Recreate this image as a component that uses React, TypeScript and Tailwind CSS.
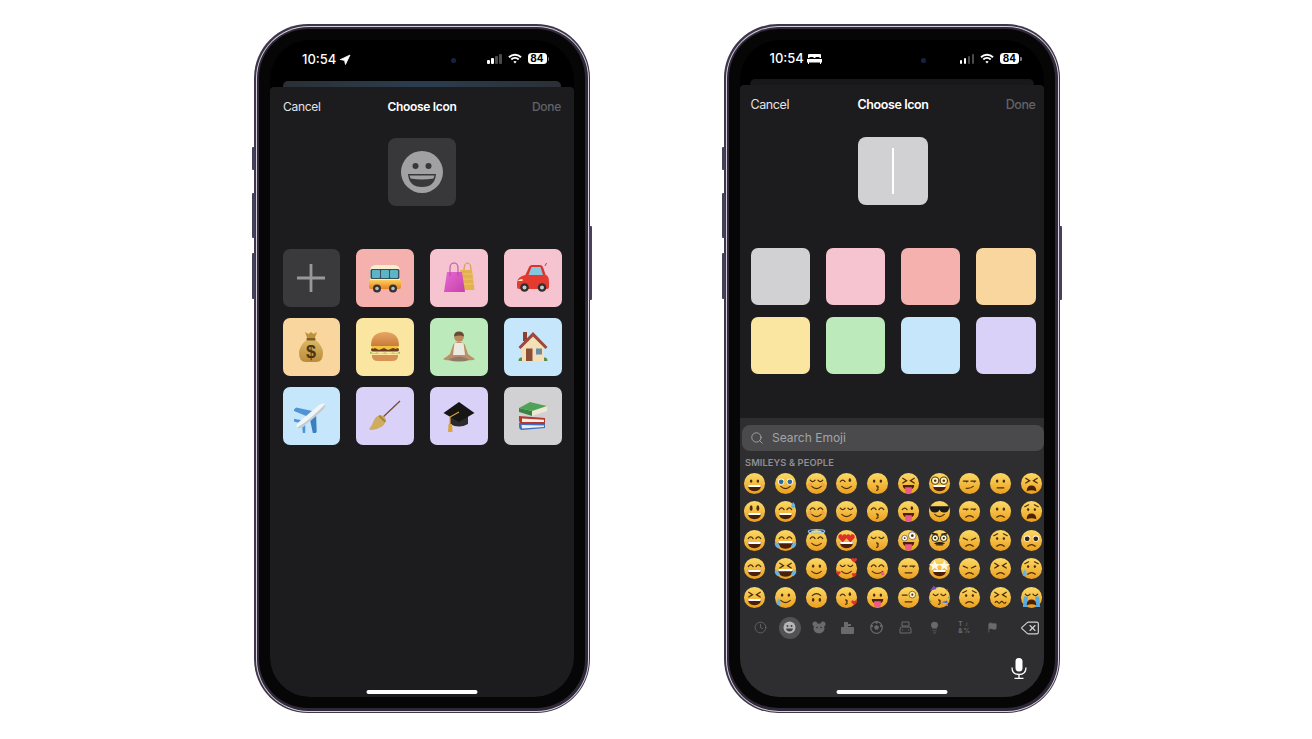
import type { ReactNode } from "react";
import { Clock, Delete, Flag, Lightbulb, Navigation, Search } from "lucide-react";

const Wifi = () => (
  <svg width="14" height="11" viewBox="0 0 14 11" fill="none" stroke="#fff" strokeWidth="1.9">
    <path d="M1 4.200C4.400 .9 9.600 .9 13 4.200" />
    <path d="M3.300 6.500c2.100-2 5.300-2 7.400 0" />
    <path d="M7 10.600 5.400 8.700c.9-.8 2.300-.8 3.200 0z" fill="#fff" stroke="none" />
  </svg>
);

const Signal = () => (
  <div className="flex items-end gap-[1.5px] h-[10px]">
    <div className="w-[2.5px] h-[4px] rounded-[1px] bg-white" />
    <div className="w-[2.5px] h-[6px] rounded-[1px] bg-white" />
    <div className="w-[2.5px] h-[8px] rounded-[1px] bg-[#4a4a4c]" />
    <div className="w-[2.5px] h-[10px] rounded-[1px] bg-[#4a4a4c]" />
  </div>
);

const Battery = () => (
  <div className="flex items-center gap-[1px]">
    <div className="w-[19px] h-[11px] rounded-[3.5px] bg-white text-black text-[10px] leading-[11px] font-bold text-center">84</div>
    <div className="w-[1.5px] h-[4px] rounded-r-[1px] bg-[#77777a]" />
  </div>
);

const BedIcon = () => (
  <svg width="15" height="10" viewBox="0 0 15 10" fill="#fff">
    <path d="M2 0h11a1 1 0 0 1 1 1v3h-1.500V3h-4v1h-2V3h-4v1H1V1a1 1 0 0 1 1-1z" />
    <path d="M0 5h15v3.500h-1V10h-1V8.500H2V10H1V8.500H0z" />
  </svg>
);

function Phone({ timeClass, iconsClass, dotClass, peekClass, statusIcon, children }: {
  timeClass: string;
  iconsClass: string;
  dotClass: string;
  peekClass: string;
  statusIcon: ReactNode;
  children: ReactNode;
}) {
  return (
    <div className="relative w-[336px] h-[689px]">
      <div className="absolute left-[-2px] top-[123px] w-[3px] h-[23px] rounded-l-[1px] bg-[#47405a]" />
      <div className="absolute left-[-2px] top-[169px] w-[3px] h-[45px] rounded-l-[1px] bg-[#47405a]" />
      <div className="absolute left-[-2px] top-[229px] w-[3px] h-[46px] rounded-l-[1px] bg-[#47405a]" />
      <div className="absolute right-[-2px] top-[202px] w-[3px] h-[74px] rounded-r-[1px] bg-[#47405a]" />
      <div className="w-full h-full rounded-[54px] bg-[#3e3549] p-[1.5px]">
        <div className="w-full h-full rounded-[52.5px] bg-[#d5d0dc] p-[1px]">
          <div className="w-full h-full rounded-[51.5px] bg-[#2f2838] p-[2.5px]">
            <div className="w-full h-full rounded-[49px] bg-[#060606] p-[11px]">
              <div className="relative w-full h-full rounded-[40px] bg-black overflow-hidden flex flex-col">
                <div className={`absolute top-[18px] w-[5px] h-[5px] rounded-full bg-[#16233f] ${dotClass}`} />
                <div className="relative h-[41px] shrink-0 text-white">
                  <div className={`absolute flex items-center gap-[3px] text-[13px] font-medium leading-none ${timeClass}`}>
                    <span>10:54</span>
                    {statusIcon}
                  </div>
                  <div className={`absolute flex items-center ${iconsClass}`}>
                    <Signal />
                    <div className="ml-[6px]"><Wifi /></div>
                    <div className="ml-[6px]"><Battery /></div>
                  </div>
                </div>
                <div className={`h-[6px] rounded-t-[5px] shrink-0 ${peekClass}`} />
                {children}
                <div className="absolute bottom-[3.5px] left-1/2 -translate-x-1/2 w-[111px] h-[3.5px] rounded-full bg-white" />
              </div>
            </div>
          </div>
        </div>
      </div>
    </div>
  );
}

type Kind = "bus" | "bags" | "car" | "money" | "burger" | "yoga" | "house" | "plane" | "broom" | "cap" | "books";

function TileEmoji({ kind }: { kind: Kind }) {
  return (
    <svg width="34" height="34" viewBox="0 0 34 34">
      <defs>
        <linearGradient id="busBand" x1="0" y1="0" x2="0" y2="1">
          <stop offset="0" stopColor="#fbd05a" />
          <stop offset="1" stopColor="#ea7f24" />
        </linearGradient>
        <linearGradient id="bagPink" x1="0" y1="0" x2="1" y2="1">
          <stop offset="0" stopColor="#e56bd2" />
          <stop offset="1" stopColor="#c740ac" />
        </linearGradient>
        <linearGradient id="sack" x1="0" y1="0" x2="0" y2="1">
          <stop offset="0" stopColor="#dcb969" />
          <stop offset="1" stopColor="#b98c3a" />
        </linearGradient>
        <linearGradient id="bun" x1="0" y1="0" x2="0" y2="1">
          <stop offset="0" stopColor="#e8a665" />
          <stop offset="1" stopColor="#c97c3a" />
        </linearGradient>
      </defs>
      {kind === "bus" && (
        <g>
          <path d="M2 10q0-6 6-6h18q6 0 6 6v14H2z" fill="#f8edcc" />
          <path d="M1 19h32v7q0 2-2 2H3q-2 0-2-2z" fill="url(#busBand)" />
          <rect x="2.500" y="8" width="29" height="10" rx="1.500" fill="#35505c" />
          <rect x="4" y="9" width="8" height="8" rx="1" fill="#5db4c6" />
          <rect x="13" y="9" width="8" height="8" rx="1" fill="#5db4c6" />
          <rect x="22" y="9" width="8" height="8" rx="1" fill="#5db4c6" />
          <circle cx="9" cy="27.500" r="4" fill="#333" />
          <circle cx="25" cy="27.500" r="4" fill="#333" />
          <circle cx="9" cy="27.500" r="1.800" fill="#bbb" />
          <circle cx="25" cy="27.500" r="1.800" fill="#bbb" />
        </g>
      )}
      {kind === "bags" && (
        <g>
          <path d="M18 9h12l2.500 20H19z" fill="#e3b14e" />
          <path d="M22 9q0-7 3.500-7T29 9" fill="none" stroke="#cd9a3c" strokeWidth="1" />
          <path d="M19 13h13M19.500 18h12.500M20 23h12.500" stroke="#f0cc76" strokeWidth=".8" />
          <path d="M5 11h15l3 20H2z" fill="url(#bagPink)" />
          <path d="M8 15V7q0-5 4-5t4 5v8" fill="none" stroke="#b8469f" strokeWidth="1" />
        </g>
      )}
      {kind === "car" && (
        <g>
          <path d="M9 15 13 6q1-2 3-2h8q2 0 3 2l3 9z" fill="#d9352b" />
          <path d="M12.500 14l3-8h9l2.500 8z" fill="#86c7de" />
          <path d="M1 22q0-6 8-8h21q3 1 3 7v5q0 2-2 2H3q-2 0-2-2z" fill="#e53a2f" />
          <path d="M1.500 20q2-2 5-2v2z" fill="#fff1c4" />
          <path d="M29 5l1.500-3" stroke="#d9352b" strokeWidth="1" />
          <circle cx="8.500" cy="26.500" r="4.300" fill="#2f2f2f" />
          <circle cx="26" cy="26.500" r="4.300" fill="#2f2f2f" />
          <circle cx="8.500" cy="26.500" r="2" fill="#c8c8c8" />
          <circle cx="26" cy="26.500" r="2" fill="#c8c8c8" />
        </g>
      )}
      {kind === "money" && (
        <g>
          <path d="M11 2l3.500 2L17 2l2.500 2L23 2l-2.500 7h-7z" fill="#bd9340" />
          <path d="M13.500 9h7q8.500 7 8.500 14 0 9-7 9H12q-7 0-7-9 0-7 8.500-14z" fill="url(#sack)" />
          <rect x="12.500" y="8" width="9" height="2.500" rx="1" fill="#7e5f22" />
          <text x="17" y="28" textAnchor="middle" fontSize="18" fontWeight="700" fill="#4a3712" fontFamily="Liberation Sans, sans-serif">$</text>
        </g>
      )}
      {kind === "burger" && (
        <g>
          <path d="M3 16q0-14 14-14t14 14z" fill="url(#bun)" />
          <rect x="3" y="18" width="28" height="3.500" rx="1.700" fill="#6a3a1e" />
          <path d="M3 16h28l-3 3-3-1-5 2-4-2-5 2-4-2-2 1z" fill="#f2c23b" />
          <path d="M2 21.500q3 3 7 1 3 2 8 0 4 2 8 0 4 2 7-1v2H2z" fill="#86b84a" />
          <path d="M4 25h26v1q0 5-6 5H10q-6 0-6-5z" fill="#d79353" />
        </g>
      )}
      {kind === "yoga" && (
        <g>
          <path d="M1 29q5-3 7-5l3-9q1-3 6-3t6 3l3 9q2 2 7 5-2 2-6 1l-5-2H13l-5 2q-4 1-7-1z" fill="#bb9068" />
          <path d="M12.500 13h9l1.500 12H11z" fill="#ebe9e0" />
          <path d="M6 30q11-7 22 0-11 3-22 0z" fill="#8f7a68" />
          <circle cx="17" cy="7" r="4.800" fill="#b98a60" />
          <path d="M12 6.500Q12 1.500 17 1.500t5 5q-4-2-10 0z" fill="#6b4a32" />
        </g>
      )}
      {kind === "house" && (
        <g>
          <rect x="7" y="2" width="4" height="9" fill="#8e3f34" />
          <path d="M6 16 17 5l11 11v15H6z" fill="#f3dfb8" />
          <path d="M2.500 17 17 2l14.500 15-2 2L17 6.500 4.500 19z" fill="#a0453a" />
          <rect x="10" y="18.500" width="6.500" height="12.500" fill="#8c4e37" />
          <rect x="20" y="18.500" width="6" height="6" fill="#6a8ca8" />
          <path d="M2.500 31q0-4 3.500-3.500V31zM28 27.500q3.500-.5 3.500 3.500H28z" fill="#5d8a45" />
        </g>
      )}
      {kind === "plane" && (
        <g transform="rotate(-40 17 17)">
          <path d="M14 15 6.500 1h4.500l11 14z" fill="#4f95d6" />
          <path d="M14 19 6.500 33h4.500l11-14z" fill="#3a7fc2" />
          <path d="M3 14-1 8h3l5 6zM3 20l-4 6h3l5-6z" fill="#4f95d6" />
          <path d="M-1 17q0-3.200 5-3.200h25q5 0 7 3.200-2 3.200-7 3.200H4q-5 0-5-3.200z" fill="#f2f5f7" />
          <path d="M-1 17q14 2.500 37 0-2 3.200-7 3.200H4q-5 0-5-3.200z" fill="#c0ccd5" />
        </g>
      )}
      {kind === "broom" && (
        <g>
          <path d="M13 20 32 2" stroke="#6f4a35" strokeWidth="1.200" />
          <path d="M12 16q6 1 6 6-3 8-14 9-2 0-3-1 3-3 5-9 2-4 6-5z" fill="#d0ac60" />
          <path d="M12 16l6 6-1.500 1.500-6-6z" fill="#a8853d" />
        </g>
      )}
      {kind === "cap" && (
        <g>
          <path d="M8 17v8q9 5 18 0v-8z" fill="#2b2b2b" />
          <path d="M1.500 14 17 3l15.500 11L17 23z" fill="#161616" />
          <path d="M17 13 8 18v8" fill="none" stroke="#d9a53e" strokeWidth="1.200" />
          <path d="M6.500 25h3.500l.5 8H6z" fill="#d9a53e" />
        </g>
      )}
      {kind === "books" && (
        <g>
          <path d="M3 24 29 25v4l-23 2q-3 0-3-4z" fill="#3d6fc0" />
          <path d="M5.500 26 28 26.500v1.500L6 29.500z" fill="#eeeeee" />
          <path d="M3 17l26 2v6H6q-3-.5-3-4z" fill="#b5392f" />
          <path d="M6 19.500l22 1.300v2.200H6z" fill="#f2efe6" />
          <path d="M3 9 14 3l17 4v5l-15 5-13-4z" fill="#eee8d4" />
          <path d="M3 9 14 3l17 4-15 5z" fill="#4fa257" />
          <path d="M3 9l13 3v5L3 13z" fill="#3a8443" />
        </g>
      )}
    </svg>
  );
}

const tilesLeft: { bg: string; kind: Kind }[] = [
  { bg: "bg-[#f4b1ad]", kind: "bus" },
  { bg: "bg-[#f6c3d1]", kind: "bags" },
  { bg: "bg-[#f6c3d1]", kind: "car" },
  { bg: "bg-[#f9d69e]", kind: "money" },
  { bg: "bg-[#fae6a1]", kind: "burger" },
  { bg: "bg-[#bdeabb]", kind: "yoga" },
  { bg: "bg-[#c6e7fb]", kind: "house" },
  { bg: "bg-[#c6e7fb]", kind: "plane" },
  { bg: "bg-[#d9d1f8]", kind: "broom" },
  { bg: "bg-[#d9d1f8]", kind: "cap" },
  { bg: "bg-[#d1d1d3]", kind: "books" },
];

const swatches = [
  "bg-[#d1d1d3]", "bg-[#f6c3d1]", "bg-[#f4b1ad]", "bg-[#f9d69e]",
  "bg-[#fae6a1]", "bg-[#bdeabb]", "bg-[#c6e7fb]", "bg-[#d9d1f8]",
];

type FaceSpec = [string, string, string?];

// order goes row by row, same as the emoji keyboard
const faces: FaceSpec[] = [
  ["dot", "grin"], ["tears", "smile"], ["closed", "smile", "blush"], ["wink", "smile"], ["dot", "kiss"], ["x", "tongue"], ["nerd", "grin"], ["side", "smirk"], ["dot", "flat"], ["x", "wail"],
  ["tall", "grin"], ["happy", "grin", "sweat"], ["happy", "smile", "blush"], ["closed", "smile"], ["happy", "kiss"], ["wink", "tongue"], ["shades", "smile"], ["side", "frown"], ["dot", "frown"], ["sadbrow", "wail"],
  ["happy", "grin"], ["happy", "laugh", "tearsboth"], ["happy", "smile", "halo"], ["hearts", "grin"], ["closed", "kiss"], ["zany", "tongue"], ["disguise", "flat"], ["sadclosed", "frown"], ["sadbrow", "frown"], ["plead", "frown"],
  ["happy", "grin"], ["x", "laugh", "tearsboth"], ["dot", "smile"], ["closed", "smile", "hearts"], ["happy", "tonguecorner"], ["side", "flat"], ["stars", "grin"], ["sadclosed", "frown"], ["x", "frown"], ["sadbrow", "frown", "tear"],
  ["x", "grin"], ["dot", "smile", "tear"], ["updown", "updown"], ["wink", "kiss", "heart"], ["dot", "tongue"], ["monocle", "flat"], ["closed", "kiss", "party"], ["sadbrow", "frown"], ["x", "wavy"], ["closed", "wail", "cry"],
];

const ink = "#4a2c0a";

function Eyes({ type }: { type: string }) {
  const line = { fill: "none", stroke: ink, strokeWidth: 1.3, strokeLinecap: "round" as const };
  switch (type) {
    case "tall":
      return <g fill={ink}><ellipse cx="8.500" cy="8.500" rx="1.500" ry="3" /><ellipse cx="15.500" cy="8.500" rx="1.500" ry="3" /></g>;
    case "happy":
      return <g {...line}><path d="M5.500 10q2.500-3.500 5 0" /><path d="M13.500 10q2.500-3.500 5 0" /></g>;
    case "closed":
      return <g {...line}><path d="M5.500 8.500q2.500 3 5 0" /><path d="M13.500 8.500q2.500 3 5 0" /></g>;
    case "sadclosed":
      return <g {...line}><path d="M5.500 9.500l4.500 2" /><path d="M18.500 9.500l-4.500 2" /></g>;
    case "wink":
      return <g {...line}><path d="M5.500 10q2.500-3 5 0" /><ellipse cx="15.500" cy="8.500" rx="1.300" ry="1.900" fill={ink} stroke="none" /></g>;
    case "x":
      return <g {...line}><path d="M6 6.500l4 2.500-4 2.500" /><path d="M18 6.500 14 9l4 2.500" /></g>;
    case "side":
      return <g {...line}><path d="M5.500 9.500h5" /><path d="M13.500 9.500h5" /><circle cx="9" cy="10.300" r=".8" fill={ink} stroke="none" /><circle cx="17" cy="10.300" r=".8" fill={ink} stroke="none" /></g>;
    case "sadbrow":
      return <g><path d="M5 7l4-2M19 7l-4-2" {...line} /><ellipse cx="8.500" cy="10" rx="1.200" ry="1.500" fill={ink} /><ellipse cx="15.500" cy="10" rx="1.200" ry="1.500" fill={ink} /></g>;
    case "hearts":
      return <g fill="#e0302b"><path d="M8 14 3.500 9.200Q3 5.500 6 5.500 7.500 5.500 8 7q.5-1.500 2-1.500 3 0 2.500 3.700z" /><path d="M16 14l-4.500-4.800Q11 5.500 14 5.500q1.500 0 2 1.500.5-1.500 2-1.500 3 0 2.500 3.700z" /></g>;
    case "nerd":
      return <g><circle cx="7.500" cy="9" r="3.800" fill="#fff3c4" stroke="#5a3c10" strokeWidth="1.200" /><circle cx="16.500" cy="9" r="3.800" fill="#fff3c4" stroke="#5a3c10" strokeWidth="1.200" /><circle cx="7.500" cy="9" r="1.300" fill={ink} /><circle cx="16.500" cy="9" r="1.300" fill={ink} /></g>;
    case "shades":
      return <path d="M2 6.500h20v2q-1 5-5.500 4.500-3.500 0-4.500-3-1 3-4.500 3Q3 13.500 2 8.500z" fill="#1a1a1a" />;
    case "disguise":
      return <g><path d="M4 4.500l6 1.500M20 4.500 14 6" stroke="#222" strokeWidth="2" /><circle cx="7.500" cy="9.500" r="3.500" fill="#fff3c4" stroke="#222" /><circle cx="16.500" cy="9.500" r="3.500" fill="#fff3c4" stroke="#222" /><circle cx="7.500" cy="9.500" r="1.200" fill="#222" /><circle cx="16.500" cy="9.500" r="1.200" fill="#222" /><path d="M6 15q6-3 12 0l-6 2z" fill="#222" /></g>;
    case "plead":
    case "tears":
      return <g><circle cx="7.500" cy="10" r="3.300" fill="#fff" /><circle cx="16.500" cy="10" r="3.300" fill="#fff" /><circle cx="7.500" cy="10.300" r="2.500" fill={type === "tears" ? "#2c6d9a" : "#3a2410"} /><circle cx="16.500" cy="10.300" r="2.500" fill={type === "tears" ? "#2c6d9a" : "#3a2410"} /></g>;
    case "zany":
      return <g><circle cx="8" cy="9.500" r="3" fill="#fff" stroke={ink} strokeWidth=".6" /><circle cx="16" cy="7" r="4" fill="#fff" stroke={ink} strokeWidth=".6" /><circle cx="8" cy="9.500" r="1" fill={ink} /><circle cx="16" cy="7" r="1.400" fill={ink} /></g>;
    case "monocle":
      return <g><path d="M5.500 9.500h5" {...line} /><circle cx="16" cy="9" r="3.500" fill="#fff3c4" stroke="#8a6a1c" strokeWidth="1" /><circle cx="16" cy="9" r="1.100" fill={ink} /></g>;
    case "stars":
      return <g fill="#fff8e0"><path d="M7 3l1.500 4 4.500.5-3.500 2.500 1 4L7 11.500 3.500 14l1-4L1 7.500 5.500 7z" /><path d="M17 3l1.500 4 4.500.5-3.500 2.500 1 4-3.500-2.500-3.500 2.500 1-4L11 7.500l4.500-.5z" /></g>;
    case "updown":
      return <g fill={ink}><ellipse cx="8.500" cy="14.500" rx="1.300" ry="1.900" /><ellipse cx="15.500" cy="14.500" rx="1.300" ry="1.900" /></g>;
    default:
      return <g fill={ink}><ellipse cx="8.500" cy="9.500" rx="1.300" ry="1.800" /><ellipse cx="15.500" cy="9.500" rx="1.300" ry="1.800" /></g>;
  }
}

function Mouth({ type }: { type: string }) {
  const line = { fill: "none", stroke: ink, strokeWidth: 1.2, strokeLinecap: "round" as const };
  switch (type) {
    case "grin":
      return <g><path d="M5 13.500h14q-.5 6.500-7 6.500t-7-6.500z" fill="#4a2008" /><path d="M5.300 13.500h13.400l-.4 2.200H5.700z" fill="#fff" /></g>;
    case "laugh":
      return <g><path d="M4 12.500h16q-.5 8-8 8t-8-8z" fill="#4a2008" /><path d="M4.300 12.500h15.400l-.4 2.400H4.700z" fill="#fff" /></g>;
    case "wail":
      return <path d="M7 20q0-6 5-6t5 6q-5-2-10 0z" fill="#4a2008" />;
    case "tongue":
      return <g><path d="M6 13.500h12q0 5-6 5t-6-5z" fill="#4a2008" /><path d="M8.500 16h7v3.500q0 3-3.500 3t-3.500-3z" fill="#ec5a86" /></g>;
    case "tonguecorner":
      return <g><path d="M6.500 15q5 4.500 11 0" {...line} /><path d="M15 16.500l3-1.500 1.500 3q-2 2-3.500 1z" fill="#ec5a86" /></g>;
    case "kiss":
      return <path d="M11 14.500q3 1 1 2.300 2 1.200-1 2.400" {...line} />;
    case "flat":
      return <path d="M8.500 16.500h7" {...line} />;
    case "frown":
      return <path d="M8 18q4-3.500 8 0" {...line} />;
    case "smirk":
      return <path d="M8.500 17q4 .5 7.500-2" {...line} />;
    case "wavy":
      return <path d="M6.500 17q1.500-2 2.800 0t2.700 0 2.700 0 2.800 0" {...line} />;
    case "updown":
      return <path d="M7.500 10q4.500-4 9 0" {...line} />;
    default:
      return <path d="M7 15q5 4.500 10 0" {...line} />;
  }
}

function Extra({ type }: { type?: string }) {
  switch (type) {
    case "sweat":
      return <path d="M20 2q2.500 3 2 4.500a2 2 0 0 1-4 0Q18 5 20 2z" fill="#63b4e6" />;
    case "tear":
      return <path d="M5 13q2.500 3 2 5a2.200 2.200 0 0 1-4.400 0Q2.800 16 5 13z" fill="#63b4e6" />;
    case "tearsboth":
      return <g fill="#63b4e6"><path d="M1 13q-1 5 3 7l2-3zM23 13q1 5-3 7l-2-3z" /></g>;
    case "cry":
      return <g fill="#59a9e2"><path d="M4 11h4v11H3zM16 11h4l1 11h-5z" /></g>;
    case "blush":
      return <g fill="#f2864f" opacity=".45"><circle cx="5.500" cy="13.500" r="2.200" /><circle cx="18.500" cy="13.500" r="2.200" /></g>;
    case "halo":
      return <ellipse cx="12" cy="2.500" rx="8.500" ry="1.800" fill="none" stroke="#8fc7ef" strokeWidth="1.400" />;
    case "hearts":
      return <g fill="#e0302b"><path d="M20 6l-3-3q0-2.500 1.800-2 .9.300 1.200 1 .3-.7 1.200-1Q23 .5 23 3z" /><path d="M3.500 19 1 16.500q0-2 1.500-1.700.7.200 1 .8.300-.6 1-.8Q6 14.500 6 16.500z" /><path d="M20 21l-2.500-2.500q0-2 1.500-1.700.7.200 1 .8.300-.6 1-.8 1.500-.3 1.500 1.700z" /></g>;
    case "heart":
      return <path d="M20 20l-3-3q0-2.500 1.800-2 .9.300 1.200 1 .3-.7 1.200-1Q23 14.500 23 17z" fill="#e0302b" />;
    case "party":
      return <g><path d="M2 5 6-.5 9 3z" fill="#7a4ac8" /><circle cx="20" cy="4" r="1" fill="#e0302b" /><circle cx="22" cy="12" r="1" fill="#4d8de0" /><circle cx="3" cy="16" r="1" fill="#4dbb6a" /><circle cx="20" cy="20" r="1" fill="#e05aa0" /><path d="M14 17l6-2 .5 3z" fill="#3d6fe0" /></g>;
    default:
      return null;
  }
}

function Face({ spec, id }: { spec: FaceSpec; id: number }) {
  const [eyes, mouth, extra] = spec;
  return (
    <svg width="23" height="23" viewBox="0 0 24 24" className="overflow-visible">
      <defs>
        <linearGradient id={`face${id}`} x1="0" y1="0" x2="0" y2="1">
          <stop offset="0" stopColor="#fbdb66" />
          <stop offset="1" stopColor="#eb9e1e" />
        </linearGradient>
      </defs>
      <circle cx="12" cy="12" r="11" fill={`url(#face${id})`} />
      {extra === "cry" && <Extra type={extra} />}
      <Eyes type={eyes} />
      <Mouth type={mouth} />
      {extra !== "cry" && <Extra type={extra} />}
    </svg>
  );
}

const catClass = "w-[13px] h-[13px] text-[#6a6a6d]";

function EmojiKeyboard() {
  return (
    <div className="mt-auto h-[279px] bg-[#2e2e30] flex flex-col">
      <div className="mt-[7px] ml-[2px] h-[26px] rounded-[8px] bg-[#4a4a4c] flex items-center pl-[8px] gap-[8px]">
        <Search size={14} strokeWidth={1.6} className="text-[#a3a3a8]" />
        <span className="text-[12px] text-[#a3a3a8] leading-none">Search Emoji</span>
      </div>
      <div className="mt-[6px] ml-[5px] h-[11px] text-[9.3px] leading-[11px] font-semibold text-[#8e8e93] tracking-[0.1px]">SMILEYS &amp; PEOPLE</div>
      <div className="ml-[-0.5px] mt-[1px] w-[307px] grid grid-cols-10 auto-rows-[28.5px]">
        {faces.map((f, i) => (
          <div key={i} className="flex items-center justify-center">
            <Face spec={f} id={i} />
          </div>
        ))}
      </div>
      <div className="mt-[4px] h-[24px] flex items-center pl-[9.5px]">
        <div className="w-[22px] flex justify-center"><Clock className={catClass} strokeWidth={1.5} /></div>
        <div className="ml-[7px] w-[22px] h-[22px] rounded-full bg-[#525254] flex items-center justify-center">
          <svg width="13" height="13" viewBox="0 0 13 13">
            <circle cx="6.500" cy="6.500" r="6" fill="#b5b5b8" />
            <circle cx="4.500" cy="5" r="1" fill="#444" />
            <circle cx="8.500" cy="5" r="1" fill="#444" />
            <path d="M3 7.500h7q-.5 3-3.500 3T3 7.500z" fill="#444" />
          </svg>
        </div>
        <div className="ml-[7px] w-[22px] flex justify-center">
          <svg width="14" height="13" viewBox="0 0 14 13" fill="#6a6a6d">
            <circle cx="3" cy="3" r="2.500" />
            <circle cx="11" cy="3" r="2.500" />
            <ellipse cx="7" cy="7.500" rx="5.500" ry="5" />
            <circle cx="5" cy="6.500" r=".8" fill="#2e2e30" />
            <circle cx="9" cy="6.500" r=".8" fill="#2e2e30" />
          </svg>
        </div>
        <div className="ml-[7px] w-[22px] flex justify-center">
          <svg width="13" height="13" viewBox="0 0 13 13" fill="#6a6a6d">
            <rect x="0" y="6" width="13" height="7" rx="1" />
            <rect x="3" y="1" width="4" height="5" />
            <path d="M7 3h3v2H7z" />
          </svg>
        </div>
        <div className="ml-[7px] w-[22px] flex justify-center">
          <svg width="13" height="13" viewBox="0 0 13 13" fill="#6a6a6d">
            <circle cx="6.500" cy="6.500" r="5.800" fill="none" stroke="#6a6a6d" strokeWidth="1.200" />
            <path d="M6.500 4 9 5.700 8 8.500H5L4 5.700z" />
            <circle cx="6.500" cy="1.500" r="1.200" />
            <circle cx="1.800" cy="5" r="1.200" />
            <circle cx="11.200" cy="5" r="1.200" />
          </svg>
        </div>
        <div className="ml-[7px] w-[22px] flex justify-center">
          <svg width="13" height="13" viewBox="0 0 13 13" fill="none" stroke="#6a6a6d" strokeWidth="1">
            <path d="M3 1h7v4H3z" />
            <path d="M1 12V8q0-2 2-2h7q2 0 2 2v4z" />
            <path d="M3 9h1M9 9h1" />
          </svg>
        </div>
        <div className="ml-[7px] w-[22px] flex justify-center"><Lightbulb className={catClass} fill="#6a6a6d" strokeWidth={1.2} /></div>
        <div className="ml-[7px] w-[22px] flex justify-center">
          <div className="grid grid-cols-2 w-[12px] text-[6.5px] leading-[6.5px] font-bold text-[#6a6a6d] text-center">
            <span>T</span><span>♪</span><span>&amp;</span><span>%</span>
          </div>
        </div>
        <div className="ml-[7px] w-[22px] flex justify-center"><Flag className="w-[11px] h-[11px] text-[#6a6a6d]" fill="#6a6a6d" strokeWidth={1.5} /></div>
        <Delete className="ml-[16px] text-[#d0d0d3]" size={20} strokeWidth={1.4} />
      </div>
      <div className="mt-[18px] flex justify-end pr-[17px]">
        <svg width="16" height="21" viewBox="0 0 16 21" fill="none" stroke="#fff" strokeWidth="1.300">
          <rect x="4.500" y="0" width="7" height="13.500" rx="3.500" fill="#fff" stroke="none" />
          <path d="M1 9.500q0 7 7 7t7-7" />
          <path d="M8 16.500v3.500M3.500 20.300h9" />
        </svg>
      </div>
    </div>
  );
}

function NavBar({ className }: { className: string }) {
  return (
    <div className={`grid grid-cols-3 items-center shrink-0 leading-none ${className}`}>
      <span className="text-[#e4e4e6] justify-self-start">Cancel</span>
      <span className="font-semibold text-white justify-self-center whitespace-nowrap">Choose Icon</span>
      <span className="font-medium text-[#636366] justify-self-end">Done</span>
    </div>
  );
}

export default function App() {
  return (
    <div className="w-[1312px] h-[739px] bg-white overflow-hidden pl-[254px] pt-[24px] flex gap-[134px] [font-family:Inter,'Noto_Sans',sans-serif]">
      <Phone
        timeClass="left-[32px] top-[13px]"
        iconsClass="right-[25px] top-[13px]"
        dotClass="left-[180.5px]"
        peekClass="mx-[13px] bg-[linear-gradient(90deg,#2b2f35,#2a3d4f,#2b2f35)]"
        statusIcon={<Navigation size={12} fill="#fff" strokeWidth={1.5} />}
      >
        <div className="flex-1 bg-[#1c1c1e] rounded-t-[4px] flex flex-col">
          <NavBar className="h-[39px] px-[13px] text-[12px] tracking-[-0.3px]" />
          <div className="mt-[12px] mx-auto w-[68px] h-[68px] rounded-[8px] bg-[#38383a] flex items-center justify-center">
            <svg width="42" height="42" viewBox="0 0 42 42">
              <circle cx="21" cy="21" r="21" fill="#a1a1a4" />
              <circle cx="14.500" cy="15" r="3" fill="#38383a" />
              <circle cx="27.500" cy="15" r="3" fill="#38383a" />
              <path d="M7 23h28q-1 13-14 13T7 23z" fill="#38383a" />
              <path d="M8.500 24.500h25l-1 3q-11.500 2-23 0z" fill="#a1a1a4" />
            </svg>
          </div>
          <div className="mt-[43px] px-[12.5px] grid grid-cols-4 gap-x-[15.7px] gap-y-[11.5px]">
            <div className="h-[57.5px] rounded-[7px] bg-[#3a3a3c] flex items-center justify-center">
              <svg width="28" height="28" viewBox="0 0 28 28" stroke="#98989a" strokeWidth="2.800">
                <path d="M14 0v28M0 14h28" />
              </svg>
            </div>
            {tilesLeft.map((t) => (
              <div key={t.kind} className={`h-[57.5px] rounded-[7px] flex items-center justify-center ${t.bg}`}>
                <TileEmoji kind={t.kind} />
              </div>
            ))}
          </div>
        </div>
      </Phone>

      <Phone
        timeClass="left-[29.5px] top-[12px]"
        iconsClass="right-[22.5px] top-[13px]"
        dotClass="left-[181px]"
        peekClass="mx-[10px] bg-[#18181a] -mt-[2px]"
        statusIcon={<BedIcon />}
      >
        <div className="flex-1 bg-[#1c1c1e] rounded-t-[4px] flex flex-col">
          <NavBar className="h-[40px] pl-[10.5px] pr-[8.5px] text-[12.5px] tracking-[-0.4px]" />
          <div className="mt-[11.5px] ml-[118px] w-[70px] h-[68.5px] rounded-[8px] bg-[#d1d1d3] flex items-center justify-center">
            <div className="w-[1.5px] h-[46px] bg-white" />
          </div>
          <div className="mt-[43px] pl-[10.5px] pr-[8.5px] grid grid-cols-4 gap-x-[16.3px] gap-y-[12px]">
            {swatches.map((c) => (
              <div key={c} className={`h-[57px] rounded-[7px] ${c}`} />
            ))}
          </div>
          <EmojiKeyboard />
        </div>
      </Phone>
    </div>
  );
}
